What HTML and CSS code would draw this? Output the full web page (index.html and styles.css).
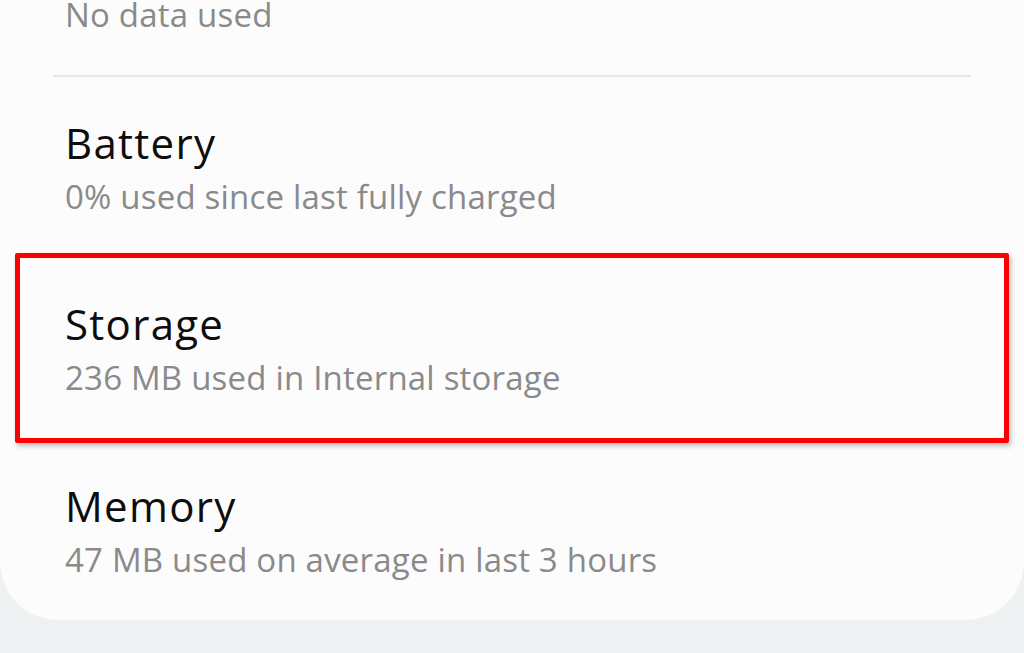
FILE: index.html
```html
<!DOCTYPE html>
<html lang="en">
<head>
<meta charset="utf-8">
<title>Settings</title>
<link rel="stylesheet" href="styles.css">
</head>
<body>
<div class="card">
  <div class="item item-first">
    <div class="sub">No data used</div>
  </div>
  <div class="divider"></div>
  <div class="item">
    <div class="title">Battery</div>
    <div class="sub">0% used since last fully charged</div>
  </div>
  <div class="item highlighted">
    <div class="title">Storage</div>
    <div class="sub">236 MB used in Internal storage</div>
  </div>
  <div class="item item-last">
    <div class="title">Memory</div>
    <div class="sub">47 MB used on average in last 3 hours</div>
  </div>
</div>
</body>
</html>
```
FILE: styles.css
```css
html, body {
  margin: 0;
  padding: 0;
  width: 1024px;
  height: 653px;
  overflow: hidden;
  background: #eef1f1;
  font-family: "Open Sans", "Noto Sans", sans-serif;
}
.card {
  background: #fcfcfc;
  border-radius: 0 0 58px 58px;
  display: flex;
  flex-direction: column;
}
.item {
  position: relative;
  padding: 41.75px 65px;
  display: flex;
  flex-direction: column;
  gap: 10px;
}
.item-first {
  padding-top: 0;
  padding-bottom: 45px;
}
.item-first .sub {
  line-height: 30px;
}
.item-last {
  padding-bottom: 40px;
}
.title {
  font-size: 42px;
  line-height: 48px;
  letter-spacing: 1.3px;
  color: #0d0d0d;
}
.sub {
  font-size: 33px;
  line-height: 40px;
  letter-spacing: 0.2px;
  color: #8a8a8a;
}
.divider {
  height: 2px;
  background: #e8e8e8;
  margin: 0 53px;
}
.highlighted::after {
  content: "";
  position: absolute;
  top: -6px;
  bottom: -3px;
  left: 15px;
  right: 15px;
  border: 5px solid #fe0000;
  border-radius: 2px;
  box-shadow: 2px 3px 5px rgba(0,0,0,0.25);
  pointer-events: none;
}
```
